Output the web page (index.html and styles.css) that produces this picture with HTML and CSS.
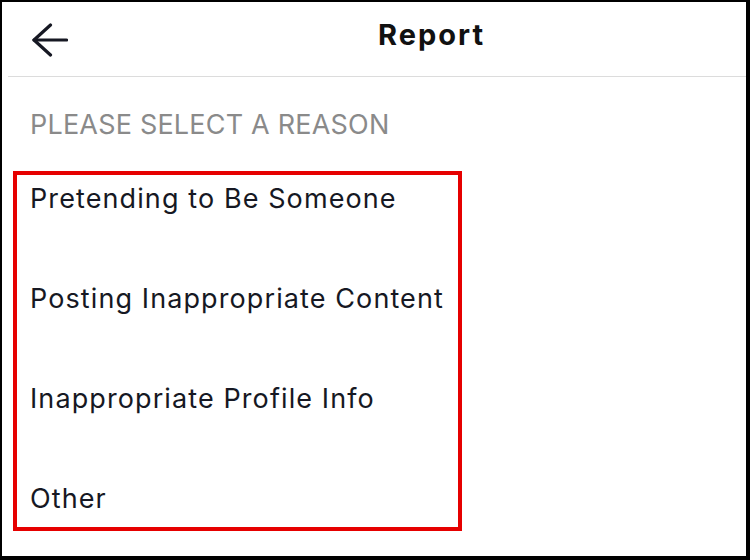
FILE: index.html
```html
<!DOCTYPE html>
<html lang="en">
<head>
    <meta charset="utf-8">
    <meta name="viewport" content="width=device-width, initial-scale=1">
    <title>Report</title>
    <link rel="stylesheet" href="styles.css">
</head>
<body>
    <div class="frame">
        <div class="header">
            <button class="back-btn" aria-label="Back">
                <svg width="36" height="34" viewBox="0 0 36 34" fill="none" stroke="#161823" stroke-width="3.2" stroke-linecap="round" stroke-linejoin="round">
                    <path d="M2 17 H34.5"/>
                    <path d="M18.5 2 L2 17 L18.5 32"/>
                </svg>
            </button>
            <div class="title">Report</div>
        </div>

        <div class="section-label">PLEASE SELECT A REASON</div>

        <div class="reasons">
            <div class="reason">Pretending to Be Someone</div>
            <div class="reason">Posting Inappropriate Content</div>
            <div class="reason">Inappropriate Profile Info</div>
            <div class="reason">Other</div>
        </div>
    </div>
</body>
</html>
```

FILE: styles.css
```css
* {
    box-sizing: border-box;
}
html, body {
    margin: 0;
    height: 100%;
}
body {
    background: #000;
    font-family: 'Inter', 'Open Sans', sans-serif;
    color: #161823;
}
.frame {
    height: 560px;
    border-style: solid;
    border-color: #000;
    border-width: 2px 4px 4px 2px;
    background: #fff;
    overflow: hidden;
}
.header {
    height: 75px;
    margin-left: 6px;
    border-bottom: 1px solid #dcdcdc;
    display: flex;
    align-items: center;
}
.back-btn {
    background: none;
    border: none;
    padding: 0;
    margin-left: 24px;
    margin-top: 1px;
    display: flex;
    cursor: pointer;
}
.title {
    margin-left: 310px;
    margin-top: -10px;
    font-size: 29px;
    font-weight: 700;
    letter-spacing: 2px;
    color: #111;
}
.section-label {
    padding: 31px 0 0 28px;
    height: 94px;
    font-size: 27px;
    letter-spacing: 0.2px;
    color: #8a8a8a;
}
.reasons {
    margin-left: 11px;
    width: 449px;
    height: 360px;
    border: 4px solid #e60000;
    padding-left: 13px;
}
.reason {
    height: 100px;
    font-size: 27px;
    letter-spacing: 1.1px;
    line-height: 1;
    padding-top: 10px;
}
```
